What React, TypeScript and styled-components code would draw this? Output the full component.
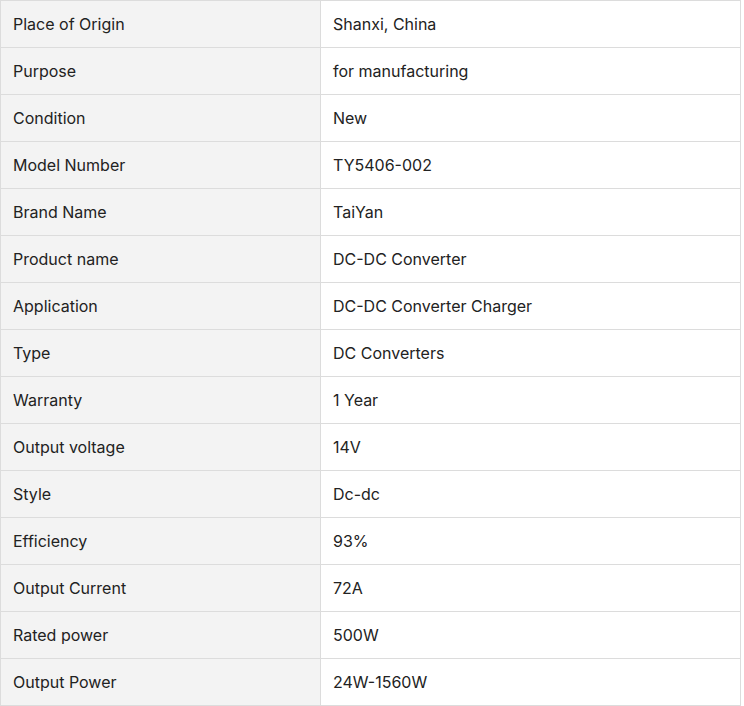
import React from "react";
import styled, { createGlobalStyle } from "styled-components";

const Global = createGlobalStyle`
  html, body { margin: 0; padding: 0; background: #fff; }
  body { font-family: Inter, "Noto Sans", sans-serif; }
`;

const Table = styled.table`
  border-collapse: collapse;
  width: 741px;
  table-layout: fixed;
  font-family: Inter, "Noto Sans", sans-serif;
  font-size: 16px;
  color: #222;
`;

const Row = styled.tr`
  height: 47px;
`;

const Cell = styled.td<{ $label?: boolean }>`
  border: 1px solid #dcdcdc;
  padding: 0 12px;
  height: 46px;
  box-sizing: border-box;
  background: ${(p) => (p.$label ? "#f3f3f3" : "#fff")};
  width: ${(p) => (p.$label ? "320px" : "auto")};
  vertical-align: middle;
  line-height: 20px;
`;

const rows: [string, string][] = [
  ["Place of Origin", "Shanxi, China"],
  ["Purpose", "for manufacturing"],
  ["Condition", "New"],
  ["Model Number", "TY5406-002"],
  ["Brand Name", "TaiYan"],
  ["Product name", "DC-DC Converter"],
  ["Application", "DC-DC Converter Charger"],
  ["Type", "DC Converters"],
  ["Warranty", "1 Year"],
  ["Output voltage", "14V"],
  ["Style", "Dc-dc"],
  ["Efficiency", "93%"],
  ["Output Current", "72A"],
  ["Rated power", "500W"],
  ["Output Power", "24W-1560W"],
];

export default function App() {
  return (
    <>
      <Global />
      <Table>
        <tbody>
          {rows.map(([k, v]) => (
            <Row key={k}>
              <Cell $label>{k}</Cell>
              <Cell>{v}</Cell>
            </Row>
          ))}
        </tbody>
      </Table>
    </>
  );
}
